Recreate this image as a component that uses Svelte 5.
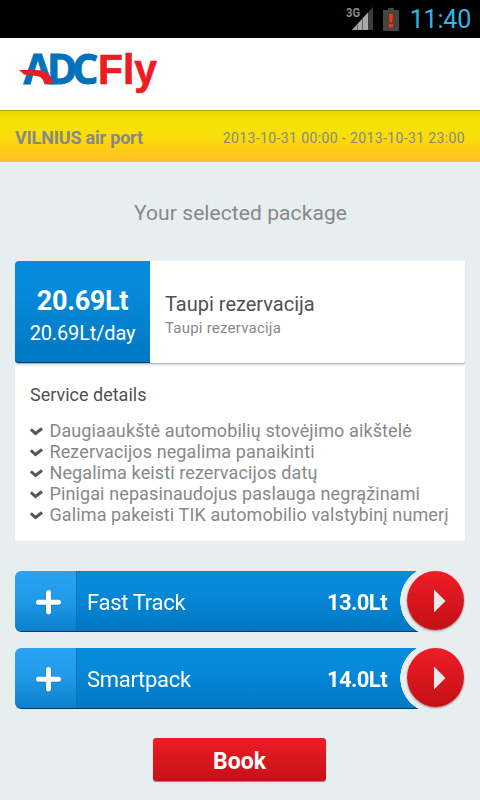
<script lang="ts">
  const parking = {
    name: 'VILNIUS air port',
    period: '2013-10-31 00:00 - 2013-10-31 23:00',
  };

  const selected = {
    total: '20.69Lt',
    daily: '20.69Lt/day',
    title: 'Taupi rezervacija',
    subtitle: 'Taupi rezervacija',
  };

  const details = [
    'Daugiaaukštė automobilių stovėjimo aikštelė',
    'Rezervacijos negalima panaikinti',
    'Negalima keisti rezervacijos datų',
    'Pinigai nepasinaudojus paslauga negrąžinami',
    'Galima pakeisti TIK automobilio valstybinį numerį',
  ];

  const extras = [
    { name: 'Fast Track', price: '13.0Lt' },
    { name: 'Smartpack', price: '14.0Lt' },
  ];
</script>

<div class="screen">
  <div class="status">
    <svg class="signal" width="28" height="26" viewBox="0 0 28 26">
      <path d="M6 24 27 1v23z" fill="#3c3c3c" />
      <path d="M6 24 22 6.500V24z" fill="#a9a9a9" />
      <path d="M11.500 19v5M16.500 13v11" stroke="#666" />
      <text x="0" y="11" textLength="14" lengthAdjust="spacingAndGlyphs">3G</text>
    </svg>
    <svg class="battery" width="16" height="25" viewBox="0 0 16 25">
      <path d="M5 1h6v2h5v21H0V3h5z" fill="#444" />
      <path d="M6 7h4l-.6 8.500H6.600zM6 17h4v3.500H6z" fill="#ff3300" />
    </svg>
    <span class="clock">11:40</span>
  </div>

  <header class="header">
    <svg class="logo" width="140" height="44" viewBox="0 0 140 44">
      <text class="logo-adc" x="4.500" y="31.500" textLength="75" lengthAdjust="spacing">ADC</text>
      <path d="M14.500 21.500H25L28 32.500H12z" fill="#fff" />
      <path class="swoosh" d="M0 18h17c10 0 15 4 17 14h-8.500c-1.800-6.500-4.500-8-10.500-8.300L5 22.500z" />
      <text class="logo-fly" x="79" y="31.500" textLength="59" lengthAdjust="spacingAndGlyphs">Fly</text>
    </svg>
  </header>

  <div class="bar">
    <strong>{parking.name}</strong>
    <span>{parking.period}</span>
  </div>

  <main>
    <h1>Your selected package</h1>

    <section class="package">
      <div class="price">
        <b>{selected.total}</b>
        <span>{selected.daily}</span>
      </div>
      <div class="package-text">
        <h2>{selected.title}</h2>
        <p>{selected.subtitle}</p>
      </div>
    </section>

    <section class="details">
      <h3>Service details</h3>
      <ul>
        {#each details as item}
          <li>
            <svg width="13" height="10" viewBox="0 0 13 10">
              <path d="M.8 3.300 5.500 7.500 12 2.500" fill="none" stroke="#555" stroke-width="3" />
            </svg>
            <span>{item}</span>
          </li>
        {/each}
      </ul>
    </section>

    {#each extras as extra}
      <div class="extra">
        <div class="extra-body">
          <span class="add">
            <svg width="26" height="26" viewBox="0 0 26 26">
              <path d="M13.500 3.800v20M3.500 13.800h20" stroke="#0764a8" stroke-opacity=".6" stroke-width="5.500" stroke-linecap="round" />
              <path d="M13.500 3.500V23M3.500 13.300h20" stroke="#fff" stroke-width="5" stroke-linecap="round" />
            </svg>
          </span>
          <span class="extra-name">{extra.name}</span>
          <b>{extra.price}</b>
        </div>
        <button class="go" aria-label="Open {extra.name}">
          <svg width="12" height="24" viewBox="0 0 12 24">
            <path d="M0 .5v23L11.500 12z" fill="#e9e9e9" />
          </svg>
        </button>
      </div>
    {/each}

    <button class="book">Book</button>
  </main>
</div>

<style>
  :global(body) {
    margin: 0;
  }

  .screen {
    width: 480px;
    height: 800px;
    overflow: hidden;
    background: #e6eef0;
    font-family: Roboto, 'Noto Sans', sans-serif;
    color: #888;
  }

  .status {
    display: flex;
    justify-content: flex-end;
    align-items: center;
    height: 38px;
    padding-right: 9px;
    background: #000;
  }

  .signal {
    margin-right: 9px;
  }

  .signal text {
    font: bold 13px Roboto, sans-serif;
    fill: #8a8a8a;
  }

  .battery {
    margin-right: 11px;
  }

  .clock {
    font-size: 25px;
    line-height: 38px;
    padding-top: 2px;
    letter-spacing: -0.2px;
    color: #33b5e5;
  }

  .header {
    height: 72px;
    box-sizing: border-box;
    padding: 14px 0 0 19px;
    background: #fff;
  }

  .logo {
    display: block;
    overflow: visible;
    font-family: 'Open Sans', sans-serif;
    font-weight: 700;
    font-size: 41px;
  }

  .logo-adc {
    fill: #0072bc;
    stroke: #0072bc;
    stroke-width: 0.9px;
  }

  .logo-fly,
  .swoosh {
    fill: #ed1c24;
  }

  .logo-fly {
    font-family: 'Liberation Sans', sans-serif;
    font-size: 42px;
    stroke: #ed1c24;
    stroke-width: 0.7px;
  }

  .bar {
    display: flex;
    align-items: center;
    justify-content: space-between;
    height: 52px;
    box-sizing: border-box;
    padding: 3px 15px 0;
    border-top: 1px solid #b0a500;
    border-bottom: 1px solid #c5c2b2;
    background: linear-gradient(#e8d900, #f2e000 12%, #f8e008 45%, #ffc51c 90%, #ffc220);
  }

  .bar strong {
    font-size: 18px;
    letter-spacing: -0.2px;
  }

  .bar span {
    font-size: 14px;
    letter-spacing: 0.38px;
  }

  main {
    display: flex;
    flex-direction: column;
    align-items: center;
    padding: 0 15px;
  }

  h1,
  h2,
  h3,
  p,
  ul {
    margin: 0;
    padding: 0;
    font-weight: 400;
  }

  h1 {
    margin: 37px 0 33px;
    padding-left: 1px;
    font-size: 21px;
    line-height: 29px;
    letter-spacing: 0.08px;
  }

  .package {
    display: flex;
    width: 450px;
    height: 102px;
    border-radius: 4px 0 3px 4px;
    background: #fff;
    box-shadow: 0 1px 1px #aab3b7;
  }

  .price {
    display: flex;
    flex-direction: column;
    align-items: center;
    width: 135px;
    box-sizing: border-box;
    padding-top: 23px;
    border-radius: 4px 0 0 4px;
    background: linear-gradient(#078cdd, #0689d9 35%, #0077c3);
    box-shadow: inset 0 -1px #003c70;
    color: #fff;
  }

  .price b {
    font-size: 27px;
    line-height: 34px;
    letter-spacing: -0.3px;
  }

  .price span {
    font-size: 20px;
    line-height: 30px;
    letter-spacing: -0.15px;
  }

  .package-text {
    padding: 30px 0 0 15px;
  }

  h2 {
    font-size: 20px;
    line-height: 26px;
    color: #505050;
  }

  .package-text p {
    font-size: 15px;
    line-height: 22px;
    letter-spacing: 0.22px;
  }

  .details {
    width: 450px;
    height: 175px;
    box-sizing: border-box;
    margin: 3px 0 30px;
    padding: 17px 0 0 15px;
    background: #fff;
  }

  h3 {
    margin-bottom: 13px;
    font-size: 18px;
    line-height: 24px;
    color: #505050;
  }

  li {
    display: flex;
    align-items: center;
    gap: 6.5px;
    height: 21px;
    font-size: 18px;
    letter-spacing: 0.11px;
    white-space: nowrap;
  }

  .extra {
    position: relative;
    width: 450px;
    height: 61px;
    margin-bottom: 16px;
    color: #fff;
  }

  .extra-body {
    display: flex;
    align-items: center;
    width: 403px;
    height: 61px;
    border-radius: 6px 0 0 6px;
    overflow: hidden;
    background: linear-gradient(#078cdd, #0689d9 35%, #0077c3);
    box-shadow: inset 0 -1px #003c70;
    mask: radial-gradient(circle at 420.5px 30px, transparent 35px, #000 35.5px);
  }

  .add {
    display: flex;
    align-items: center;
    justify-content: center;
    width: 62px;
    height: 60px;
    box-sizing: border-box;
    padding: 2px 0 0 5px;
    border-right: 1px solid #0673ba;
    margin-bottom: 1px;
    background: linear-gradient(#28a3f2, #219be9 45%, #0d80cb);
  }

  .extra-name {
    flex: 1;
    padding: 2px 0 0 10px;
    font-size: 22px;
    letter-spacing: -0.3px;
  }

  .extra b {
    padding: 2px 31px 0 0;
    font-size: 22px;
    letter-spacing: -0.6px;
  }

  .go {
    position: absolute;
    left: 392px;
    top: 0;
    display: flex;
    align-items: center;
    justify-content: center;
    width: 57px;
    height: 59px;
    padding: 1px 0 0 8px;
    border: 0;
    border-radius: 50%;
    background: linear-gradient(#ee1d25, #c41017);
    box-shadow: 0 1px 2px rgba(60, 30, 40, 0.5);
  }

  .book {
    width: 173px;
    height: 43px;
    margin: 13px 1px 0 0;
    padding: 3px 0 0;
    border: 0;
    border-radius: 3px;
    background: linear-gradient(#ee1d25, #c41017);
    box-shadow: 0 1px 1px #8d7f84;
    font: bold 23px Roboto, sans-serif;
    color: #fff;
  }
</style>
